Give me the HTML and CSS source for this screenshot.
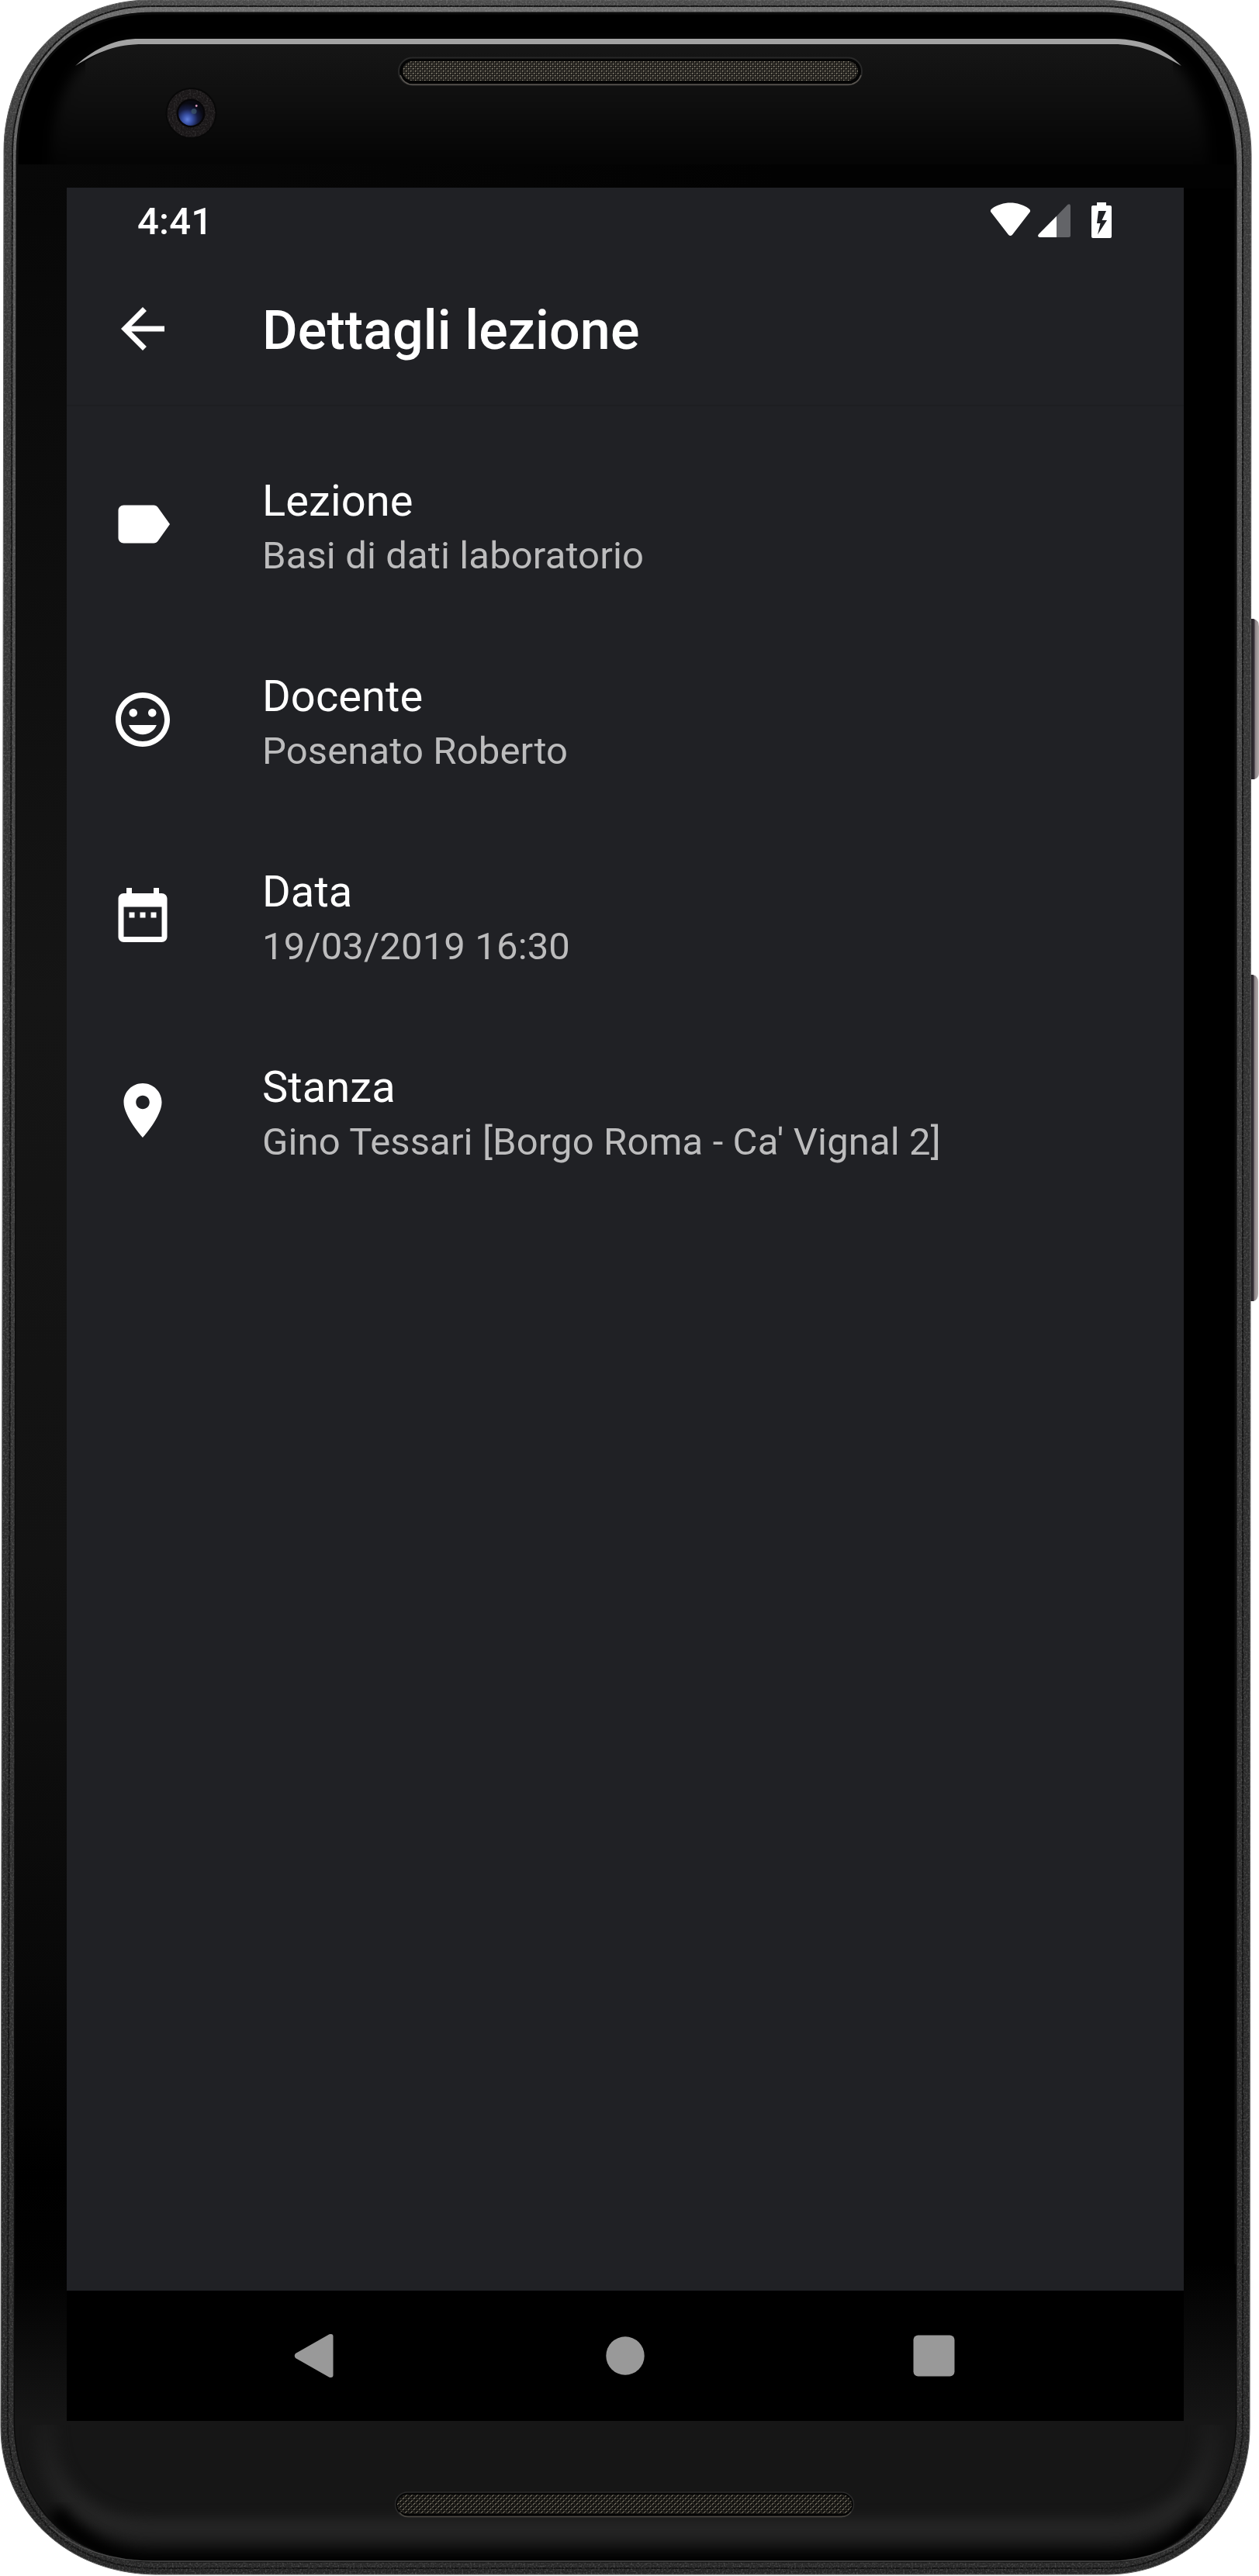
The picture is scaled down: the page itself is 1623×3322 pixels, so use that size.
FILE: index.html
```html
<!DOCTYPE html>
<html lang="it">
<head>
<meta charset="utf-8">
<title>Dettagli lezione</title>
<link rel="stylesheet" href="styles.css">
</head>
<body>
<div class="device">
  <svg class="frame" viewBox="0 0 1623 3322" aria-hidden="true">
    <defs>
      <linearGradient id="rim" x1="0" y1="0" x2="0" y2="1">
        <stop offset="0" stop-color="#4a4a4a"/><stop offset=".06" stop-color="#3a3a3a"/>
        <stop offset=".5" stop-color="#2e2e2e"/><stop offset="1" stop-color="#262626"/>
      </linearGradient>
      <linearGradient id="band" x1="0" y1="0" x2="0" y2="1">
        <stop offset="0" stop-color="#6c6c6c"/><stop offset=".15" stop-color="#505050"/>
        <stop offset=".5" stop-color="#363636"/><stop offset="1" stop-color="#282828"/>
      </linearGradient>
      <linearGradient id="top" x1="0" y1="57" x2="0" y2="212" gradientUnits="userSpaceOnUse">
        <stop offset="0" stop-color="#161616"/><stop offset=".5" stop-color="#0e0e0e"/><stop offset="1" stop-color="#040404"/>
      </linearGradient>
      <linearGradient id="left" x1="0" y1="212" x2="0" y2="3127" gradientUnits="userSpaceOnUse">
        <stop offset="0" stop-color="#070707"/><stop offset=".37" stop-color="#151515"/><stop offset=".62" stop-color="#121212"/>
        <stop offset=".8" stop-color="#080808"/><stop offset=".89" stop-color="#000"/><stop offset=".935" stop-color="#020202"/><stop offset="1" stop-color="#161616"/>
      </linearGradient>
      <linearGradient id="right" x1="0" y1="2920" x2="0" y2="3127" gradientUnits="userSpaceOnUse">
        <stop offset="0" stop-color="#000"/><stop offset="1" stop-color="#161616"/>
      </linearGradient>
      <linearGradient id="strip" x1="20" y1="0" x2="1000" y2="0" gradientUnits="userSpaceOnUse">
        <stop offset="0" stop-color="#080808"/><stop offset="1" stop-color="#020202"/>
      </linearGradient>
      <linearGradient id="glow" x1="0" y1="3120" x2="0" y2="3240" gradientUnits="userSpaceOnUse">
        <stop offset="0" stop-color="#191919"/><stop offset="1" stop-color="#242424"/>
      </linearGradient>
      <radialGradient id="lens" cx=".36" cy=".75" r=".65">
        <stop offset="0" stop-color="#6180dc"/><stop offset=".3" stop-color="#3850a4"/>
        <stop offset=".65" stop-color="#171d42"/><stop offset="1" stop-color="#0a0a12"/>
      </radialGradient>
      <linearGradient id="key" x1="0" y1="0" x2="1" y2="0">
        <stop offset="0" stop-color="#1c191b"/><stop offset=".45" stop-color="#39333a"/>
        <stop offset=".55" stop-color="#8e8689"/><stop offset="1" stop-color="#b4acac"/>
      </linearGradient>
      <pattern id="mesh" width="6" height="6" patternUnits="userSpaceOnUse">
        <rect width="6" height="6" fill="#1b1916"/>
        <path d="M1 2.3 2.4.9M4 5.3 5.4 3.9" stroke="#959080" stroke-width="1.4"/>
        <path d="M4 1l1.4 1.4M1 4l1.4 1.4" stroke="#514e48" stroke-width="1.1"/>
      </pattern>
      <pattern id="mesh2" width="7" height="7" patternUnits="userSpaceOnUse">
        <rect width="7" height="7" fill="#11100e"/>
        <path d="M.8 3.2 3.2.8M4.3 6.6 6.6 4.3" stroke="#858071" stroke-width="1.1"/>
        <path d="M4 .8l2.400 2.400M.8 4.300l2.400 2.400" stroke="#46433c" stroke-width="1"/>
      </pattern>
      <filter id="grain" x="0" y="0" width="1" height="1" color-interpolation-filters="sRGB">
        <feTurbulence type="fractalNoise" baseFrequency=".45" numOctaves="2" seed="4"/>
        <feColorMatrix values="0 0 0 0 1  0 0 0 0 1  0 0 0 0 1  1.6 0 0 0 -.7"/>
        <feComposite in2="SourceGraphic" operator="in"/>
      </filter>
      <filter id="soft" x="-10%" y="-20%" width="120%" height="140%" color-interpolation-filters="sRGB"><feGaussianBlur stdDeviation="8"/></filter>
      <clipPath id="glassClip"><path id="glass" d="M22 205C22 85 92 17 197 17H1420C1525 17 1593 100 1593 215V3120C1593 3225 1525 3303 1429 3303H200C90 3303 19 3230 19 3120Z"/></clipPath>
      <clipPath id="topClip"><path d="M0 0H1623V212H0Z"/></clipPath>
      <clipPath id="bottomClip"><path d="M0 3127H1623V3322H0Z"/></clipPath>
    </defs>

    <path d="M1612 798h4q7 2 7 10V997q0 6-6 8h-5Z" fill="url(#key)"/>
    <path d="M1611 1257h4q7 2 7 9V1668q0 8-6 10h-5Z" fill="url(#key)"/>

    <path d="M5 195C5 84 85 0 193 0H1422C1534 2 1613 88 1613 200L1611 3130C1611 3236 1532 3320 1427 3320H200C88 3319 1 3240 1 3130Z" fill="url(#rim)" stroke="#5c5c5c" stroke-width="1"/>
    <path d="M16 200C16 88 88 8 195 8H1421C1530 8 1602 92 1602 207V3124C1602 3233 1527 3312 1428 3312H200C88 3312 10 3235 10 3124Z" fill="url(#band)" stroke="#131313" stroke-width="2"/>
    <path d="M5 195C5 84 85 0 193 0H1422C1534 2 1613 88 1613 200L1611 3130C1611 3236 1532 3320 1427 3320H200C88 3319 1 3240 1 3130Z" filter="url(#grain)" opacity=".25"/>
    <use href="#glass" fill="#000" stroke="#0b0b0b" stroke-width="3"/>

    <g clip-path="url(#glassClip)">
      <g clip-path="url(#topClip)">
        <path d="M62 260C62 160 78 115 104 85C130 66 155 57 185 57H1435C1470 57 1495 67 1520 85C1548 120 1561 170 1561 260Z" fill="url(#top)" filter="url(#soft)"/>
        <path d="M110 80C135 63 155 57 185 57H1435C1470 57 1490 64 1512 80L1512 110H110Z" fill="url(#top)"/>
      </g>
      <path d="M19 212H1593V243H19Z" fill="url(#strip)"/>
      <path d="M19 242H87V3127H19Z" fill="url(#left)"/>
      <path d="M1525 2920H1593V3127H1525Z" fill="url(#right)"/>
      <path d="M19 3120H1593V3303H19Z" fill="#161616"/>
      <g clip-path="url(#bottomClip)">
        <path d="M58 3080V3130C58 3210 110 3262 200 3262H1428C1510 3262 1562 3210 1562 3130V3080" fill="none" stroke="url(#glow)" stroke-width="30" filter="url(#soft)"/>
        <path d="M70 3240C105 3283 150 3303 200 3303H1429C1475 3303 1520 3285 1552 3245" fill="none" stroke="#000" stroke-width="24" filter="url(#soft)"/>
      </g>
    </g>
    <path d="M64 3258C100 3290 145 3303 200 3303H1429C1480 3303 1522 3285 1552 3256" fill="none" stroke="#4c4c4c" stroke-width="1.5"/>
    <path d="M97 85C125 60 150 50 180 50H1437C1475 51 1500 62 1523 85C1490 66 1468 57 1435 57H185C150 57 125 67 97 85Z" fill="#a3a3a3"/>

    <rect x="514" y="74.500" width="597" height="35" rx="17.500" fill="#050505" stroke="#292929" stroke-width="2"/>
    <path d="M516 97C519 105 525 109 532 109H1093C1101 109 1107 105 1110 97" fill="none" stroke="#5b5752" stroke-width="1.500"/>
    <rect x="519" y="79" width="587" height="25" rx="12.500" fill="url(#mesh)"/>

    <circle cx="246.500" cy="146" r="33" fill="#080808"/>
    <circle cx="246.500" cy="146" r="31" fill="#1a1718"/>
    <circle cx="246.500" cy="146" r="31" filter="url(#grain)" opacity=".16"/>
    <circle cx="246" cy="146" r="18.500" fill="#070608"/>
    <circle cx="246" cy="146" r="16" fill="url(#lens)"/>
    <circle cx="250" cy="143.500" r="3.500" fill="#3c5568" opacity=".75"/>
    <circle cx="253.200" cy="136.500" r="1.400" fill="#d79abd"/>

    <rect x="509.500" y="3214" width="591" height="31.500" rx="15.700" fill="#050505" stroke="#2b2b2b" stroke-width="1.500"/>
    <path d="M515 3240Q519 3245.500 526 3245.500H1085Q1093 3245.500 1097 3239" fill="none" stroke="#4d4a43" stroke-width="1.300"/>
    <rect x="512" y="3217" width="586" height="25" rx="12.500" fill="url(#mesh2)"/>
  </svg>

  <main class="screen">
    <div class="status-bar">
      <span class="clock">4:41</span>
      <svg class="status-icons" viewBox="0 0 158 48" aria-hidden="true">
        <path fill="#fff" d="M2.200 14.500Q-.6 11.800 2.500 9.200C17 -1 36 -1 50.500 9.200Q53.600 11.800 50.800 14.500L29 42.700Q26.500 45.500 24 42.700Z"/>
        <path fill="#636468" d="M86 18.800 100.500 3.800Q104 2 104 5.800V43.500Q104 46 101.500 46H86Z"/>
        <path fill="#fff" d="M86 18.800V46H64.500Q60.500 45 63 42Z"/>
        <path fill="#fff" fill-rule="evenodd" d="M138 1h12v4h5q2 0 2 2V45q0 2-2 2H133q-2 0-2-2V7q0-2 2-2h5ZM140 12 138 28h4.500L139 42.500 151 24h-6.500L150 12Z"/>
      </svg>
    </div>
    <header class="app-bar">
      <svg class="icon" viewBox="0 0 24 24"><path d="M20 11H7.830l5.590-5.590L12 4l-8 8 8 8 1.410-1.410L7.830 13H20v-2z"/></svg>
      <h1 class="title">Dettagli lezione</h1>
    </header>
    <ul class="list">
      <li class="row">
        <svg class="icon" viewBox="0 0 24 24"><path d="M17.630 5.840C17.270 5.330 16.670 5 16 5L5 5.010C3.900 5.010 3 5.900 3 7v10c0 1.100.9 1.990 2 1.990L16 19c.67 0 1.270-.33 1.630-.84L22 12l-4.370-6.160z"/></svg>
        <div class="text"><div class="name">Lezione</div><div class="value">Basi di dati laboratorio</div></div>
      </li>
      <li class="row">
        <svg class="icon" viewBox="0 0 24 24"><path d="M11.990 2C6.470 2 2 6.480 2 12s4.470 10 9.990 10C17.520 22 22 17.520 22 12S17.520 2 11.990 2zM12 20c-4.420 0-8-3.580-8-8s3.580-8 8-8 8 3.580 8 8-3.580 8-8 8zm3.500-9c.83 0 1.500-.67 1.500-1.500S16.330 8 15.500 8 14 8.670 14 9.500s.67 1.500 1.500 1.500zm-7 0c.83 0 1.500-.67 1.500-1.500S9.330 8 8.500 8 7 8.670 7 9.500 7.670 11 8.500 11zm3.500 6.500c2.330 0 4.310-1.460 5.110-3.500H6.890c.8 2.040 2.780 3.500 5.110 3.500z"/></svg>
        <div class="text"><div class="name">Docente</div><div class="value">Posenato Roberto</div></div>
      </li>
      <li class="row">
        <svg class="icon" viewBox="0 0 24 24"><path d="M9 11H7v2h2v-2zm4 0h-2v2h2v-2zm4 0h-2v2h2v-2zm2-7h-1V2h-2v2H8V2H6v2H5c-1.110 0-1.990.9-1.990 2L3 20c0 1.100.89 2 2 2h14c1.100 0 2-.9 2-2V6c0-1.100-.9-2-2-2zm0 16H5V9h14v11z"/></svg>
        <div class="text"><div class="name">Data</div><div class="value">19/03/2019 16:30</div></div>
      </li>
      <li class="row">
        <svg class="icon" viewBox="0 0 24 24"><path d="M12 2C8.130 2 5 5.130 5 9c0 5.250 7 13 7 13s7-7.750 7-13c0-3.870-3.130-7-7-7zm0 9.500c-1.380 0-2.500-1.120-2.500-2.500s1.120-2.500 2.500-2.500 2.500 1.120 2.500 2.500-1.120 2.500-2.500 2.500z"/></svg>
        <div class="text"><div class="name">Stanza</div><div class="value">Gino Tessari [Borgo Roma - Ca' Vignal 2]</div></div>
      </li>
    </ul>
    <nav class="nav-bar">
      <svg class="nav-icon" viewBox="0 0 84 84"><path d="M16 39 59.500 14.300Q64.500 13 64.500 17V67Q64.500 71 59.500 69.700L16 45Q13.500 42 16 39Z"/></svg>
      <svg class="nav-icon" viewBox="0 0 84 84"><circle cx="42" cy="42" r="24.700"/></svg>
      <svg class="nav-icon" viewBox="0 0 84 84"><rect x="14.500" y="15.500" width="53" height="53" rx="6"/></svg>
    </nav>
  </main>
</div>
</body>
</html>
```
FILE: styles.css
```css
* {
  box-sizing: border-box;
}

body {
  margin: 0;
  background: #fff;
  font-family: Roboto, "Noto Sans", sans-serif;
}

.device {
  position: relative;
  width: 1623px;
  height: 3322px;
  padding: 242px 97px 200px 86px;
  overflow: hidden;
}

.frame {
  position: absolute;
  inset: 0;
  width: 1623px;
  height: 3322px;
}

.screen {
  position: relative;
  display: flex;
  flex-direction: column;
  width: 1440px;
  height: 2880px;
  background: #202125;
  color: #fff;
}

.status-bar {
  display: flex;
  justify-content: space-between;
  height: 84px;
  padding: 18px 92px 0 91px;
}

.clock {
  padding-top: 1px;
  font-size: 49px;
  font-weight: 500;
  line-height: 50px;
  letter-spacing: 0.2px;
}

.status-icons {
  width: 158px;
  height: 48px;
}

.app-bar {
  display: flex;
  align-items: center;
  height: 196px;
  padding: 0 56px;
  gap: 112px;
}

.icon {
  flex: none;
  width: 84px;
  height: 84px;
  fill: #fff;
}

.title {
  margin: 0;
  padding-top: 4px;
  font-size: 70px;
  font-weight: 500;
  line-height: 82px;
  letter-spacing: 0.1px;
}

.list {
  flex: 1;
  margin: 0;
  padding: 26px 0;
  border-top: 2px solid #1d1e21;
  list-style: none;
}

.row {
  display: flex;
  align-items: center;
  height: 252px;
  padding: 0 56px;
  gap: 112px;
}

.text {
  padding-top: 5px;
  white-space: nowrap;
}

.name {
  font-size: 56px;
  line-height: 75px;
  letter-spacing: 0.1px;
}

.value {
  color: #bcbcbd;
  font-size: 49px;
  line-height: 65px;
  letter-spacing: 0.13px;
}

.nav-bar {
  display: flex;
  justify-content: center;
  align-items: center;
  gap: 315px;
  height: 168px;
  background: #000;
}

.nav-icon {
  width: 84px;
  height: 84px;
  fill: #999;
}
```
